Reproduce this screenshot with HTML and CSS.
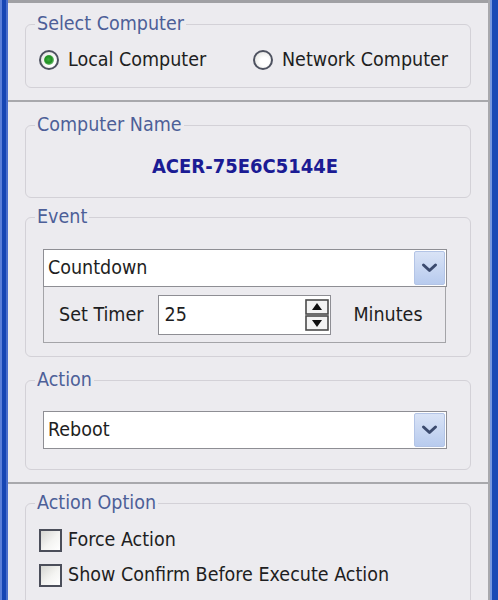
FILE: index.html
```html
<!DOCTYPE html>
<html>
<head>
<meta charset="utf-8">
<link rel="stylesheet" href="styles.css">
</head>
<body>
<div class="window">
  <div class="frame-left"></div>
  <div class="content">
    <section class="sec sec1">
      <fieldset class="grp grp-select">
        <legend>Select Computer</legend>
        <div class="row">
          <label class="opt opt-local"><span class="rb on"></span>Local Computer</label>
          <label class="opt"><span class="rb"></span>Network Computer</label>
        </div>
      </fieldset>
    </section>
    <section class="sec sec2">
      <fieldset class="grp grp-name">
        <legend>Computer Name</legend>
        <div class="pcname">ACER-75E6C5144E</div>
      </fieldset>
      <fieldset class="grp grp-event">
        <legend>Event</legend>
        <div class="combo">
          <span class="combo-text">Countdown</span>
          <span class="combo-btn"><svg width="31" height="34" viewBox="0 0 31 34"><path d="M9.5 14 L15.5 19.5 L21.5 14" fill="none" stroke="#3b4a6e" stroke-width="3" stroke-linecap="round" stroke-linejoin="round"/></svg></span>
        </div>
        <div class="timer">
          <span class="tlabel">Set Timer</span>
          <div class="num">
            <span class="num-text">25</span>
            <svg class="spin" width="24" height="32" viewBox="0 0 24 32">
              <rect x="1" y="1" width="22" height="14" fill="#f4f4f4" stroke="#4a4a4a" stroke-width="1.6"/>
              <path d="M12 4 L17 11 H7 Z" fill="#111"/>
              <rect x="1" y="17" width="22" height="14" fill="#f4f4f4" stroke="#4a4a4a" stroke-width="1.6"/>
              <path d="M7 21 H17 L12 28 Z" fill="#111"/>
            </svg>
          </div>
          <span class="tunit">Minutes</span>
        </div>
      </fieldset>
      <fieldset class="grp grp-action">
        <legend>Action</legend>
        <div class="combo">
          <span class="combo-text">Reboot</span>
          <span class="combo-btn"><svg width="31" height="34" viewBox="0 0 31 34"><path d="M9.5 14 L15.5 19.5 L21.5 14" fill="none" stroke="#3b4a6e" stroke-width="3" stroke-linecap="round" stroke-linejoin="round"/></svg></span>
        </div>
      </fieldset>
    </section>
    <section class="sec sec3">
      <fieldset class="grp grp-option">
        <legend>Action Option</legend>
        <label class="check"><span class="cb"></span>Force Action</label>
        <label class="check check2"><span class="cb"></span>Show Confirm Before Execute Action</label>
      </fieldset>
    </section>
  </div>
  <div class="frame-right"></div>
</div>
</body>
</html>
```

FILE: styles.css
```css
html, body {
  margin: 0;
  padding: 0;
}
body {
  font-family: "DejaVu Sans Condensed", "DejaVu Sans", sans-serif;
  font-stretch: condensed;
  font-size: 19.5px;
  color: #1e1e22;
}
.window {
  display: flex;
  width: 498px;
  height: 600px;
  overflow: hidden;
  background: #ecebef;
}
.frame-left {
  flex: none;
  width: 8px;
  background: linear-gradient(to right, #5b7fd8 0, #5b7fd8 2px, #1746b4 2px, #1746b4 6px, #4a6ecb 6px, #4a6ecb 8px);
}
.frame-right {
  flex: none;
  width: 8px;
  background: linear-gradient(to right, #7597df 0, #7597df 2px, #1a4ab6 2px, #1a4ab6 8px);
}
.content {
  flex: 1;
  display: flex;
  flex-direction: column;
  border-right: 2px solid #a8a8ac;
}
.sec {
  box-sizing: border-box;
  flex: none;
  overflow: hidden;
}
.sec1 {
  height: 100px;
  border-top: 3px solid #a0a0a4;
}
.sec2 {
  height: 382px;
  border-top: 2px solid #a8a8ac;
}
.sec3 {
  flex: 1;
  border-top: 2px solid #a8a8ac;
}
.grp {
  box-sizing: border-box;
  width: 446px;
  min-width: 0;
  margin: 0 0 0 17px;
  padding: 0 0 0 13px;
  border: 1px solid #d3d1d7;
  border-radius: 6px;
}
.grp legend {
  padding: 0 2px;
  margin-left: -4px;
  line-height: 22px;
  color: #4d5f98;
}
.grp-select {
  margin-top: 10px;
  padding-top: 14px;
  padding-bottom: 16px;
}
.row {
  display: flex;
  height: 22px;
  align-items: center;
}
.opt {
  display: flex;
  align-items: center;
  line-height: 22px;
}
.opt-local {
  width: 214px;
}
.rb {
  position: relative;
  box-sizing: border-box;
  width: 20px;
  height: 20px;
  margin-right: 9px;
  border: 2px solid #4e5260;
  border-radius: 50%;
  background: radial-gradient(circle at 60% 60%, #ffffff 30%, #dcdcd8 100%);
}
.rb.on::after {
  content: "";
  position: absolute;
  left: 3px;
  top: 3px;
  width: 10px;
  height: 10px;
  border-radius: 50%;
  background: radial-gradient(circle at 45% 45%, #3fae3f 0, #1f8f22 45%, #9ad49a 80%, #d8eed8 100%);
}
.grp-name {
  margin-top: 12px;
  padding-top: 18px;
  padding-bottom: 19px;
}
.pcname {
  margin-left: -13px;
  padding-right: 6px;
  text-align: center;
  font-weight: bold;
  font-size: 20px;
  line-height: 24px;
  color: #1b1b94;
}
.grp-event {
  margin-top: 8px;
  padding-top: 21px;
  padding-bottom: 13px;
}
.combo {
  box-sizing: border-box;
  display: flex;
  align-items: center;
  width: 404px;
  height: 38px;
  margin-left: 4px;
  padding: 1px;
  border: 1px solid #8e8e94;
  background: #ffffff;
}
.combo-text {
  flex: 1;
  padding-left: 3px;
  line-height: 22px;
}
.combo-btn {
  box-sizing: border-box;
  display: flex;
  width: 31px;
  height: 34px;
  border: 1px solid #b3c4e6;
  border-radius: 2px;
  background: linear-gradient(#d9e3f6, #b8cbee);
}
.combo-btn svg {
  margin: -1px;
}
.timer {
  box-sizing: border-box;
  display: flex;
  align-items: center;
  width: 403px;
  height: 56px;
  margin-left: 4px;
  padding-left: 15px;
  border: 1px solid #a4a4a8;
  border-top: none;
  line-height: 22px;
}
.num {
  box-sizing: border-box;
  display: flex;
  align-items: center;
  width: 173px;
  height: 40px;
  margin-left: 15px;
  padding: 0 1px 0 5px;
  border: 1px solid #8e8e94;
  background: #ffffff;
}
.num-text {
  flex: 1;
}
.spin {
  display: block;
}
.tunit {
  margin-left: 22px;
}
.grp-action {
  margin-top: 12px;
  padding-top: 20px;
  padding-bottom: 20px;
}
.grp-option {
  margin-top: 8px;
  padding-top: 15px;
  padding-bottom: 20px;
}
.check {
  display: flex;
  align-items: center;
  height: 22px;
  line-height: 22px;
}
.check2 {
  margin-top: 13px;
}
.cb {
  box-sizing: border-box;
  width: 23px;
  height: 23px;
  margin-right: 6px;
  border: 2px solid #4b4e5a;
  background: linear-gradient(135deg, #d6d6d2 0%, #f4f4f2 55%, #ffffff 100%);
}
```
